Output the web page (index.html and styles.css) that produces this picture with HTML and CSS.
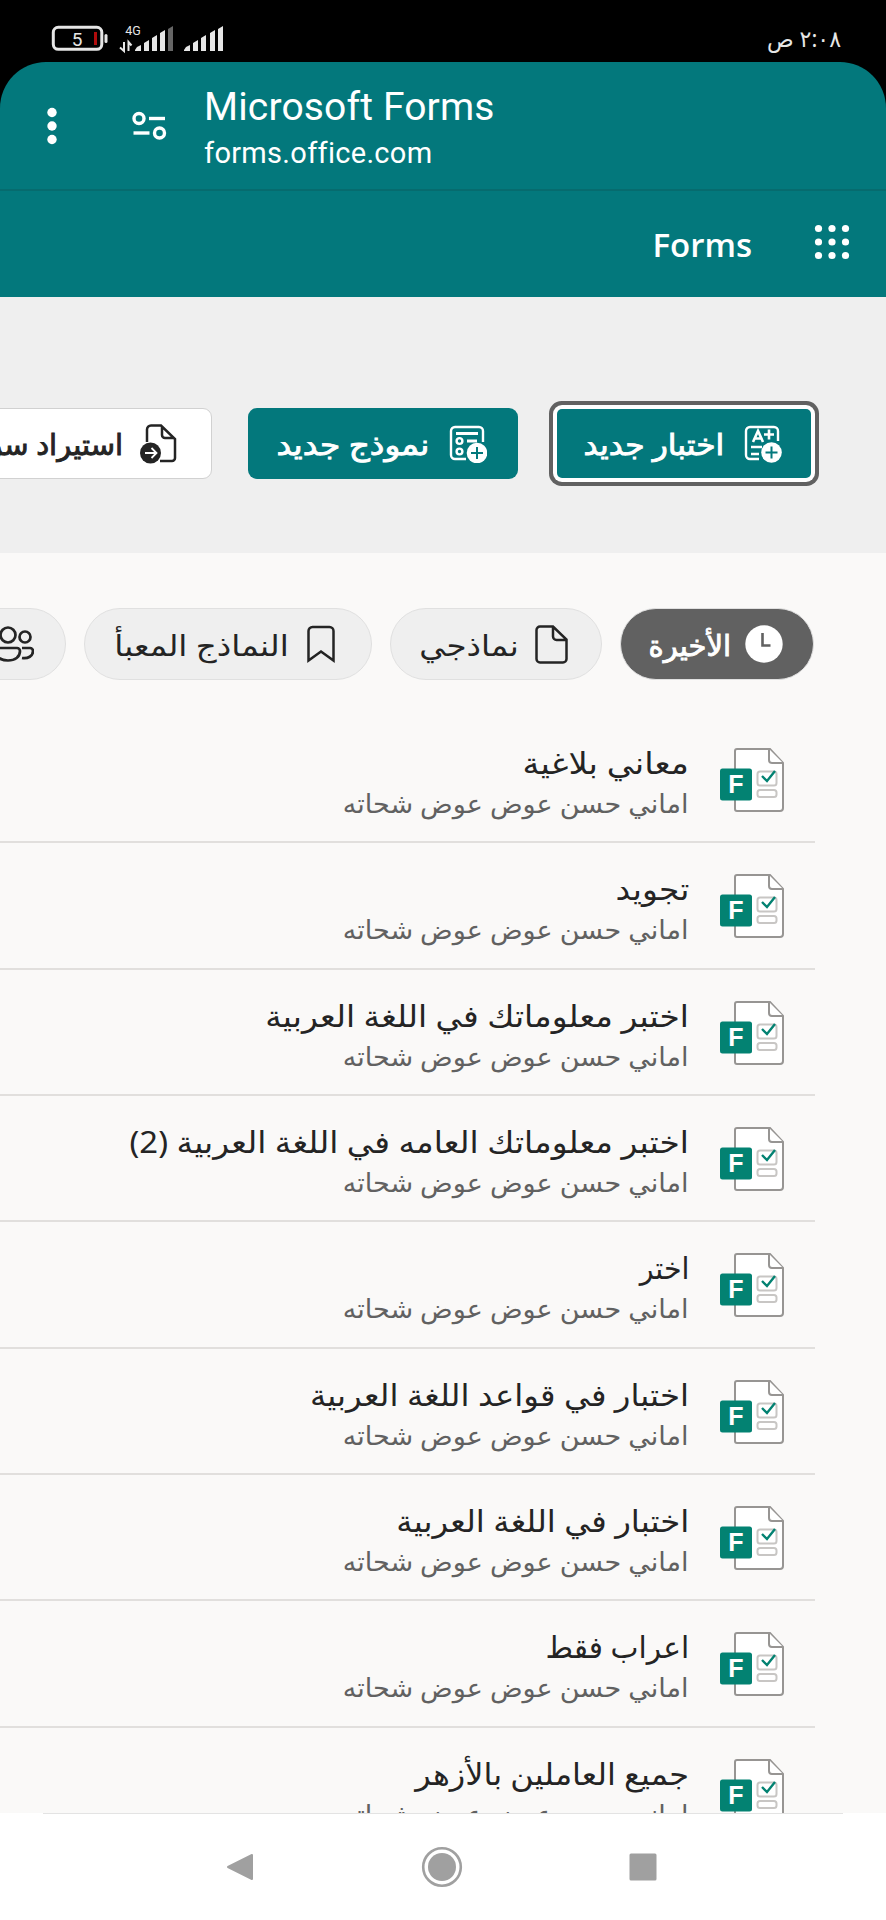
FILE: index.html
```html
<!DOCTYPE html>
<html lang="ar" dir="rtl">
<head>
    <meta charset="UTF-8">
    <meta name="viewport" content="width=device-width, initial-scale=1.0">
    <title>Microsoft Forms</title>
    <link rel="stylesheet" href="styles.css">
</head>
<body>
    <svg class="defs" width="0" height="0">
        <symbol id="form_icon" viewBox="0 0 64 64">
            <path d="M17 1h33l13 14v45a3 3 0 0 1-3 3H17a2 2 0 0 1-2-2V3a2 2 0 0 1 2-2z" fill="#fff" stroke="#979593" stroke-width="2"/>
            <path d="M49 1v11a3 3 0 0 0 3 3h11" fill="#fff" stroke="#979593" stroke-width="2"/>
            <rect x="37.500" y="23.500" width="19" height="14" rx="2.500" fill="none" stroke="#c8c6c4" stroke-width="2"/>
            <rect x="37.500" y="42" width="19" height="7" rx="2.500" fill="none" stroke="#c8c6c4" stroke-width="2"/>
            <path d="M42 28l5 5 8-10" fill="none" stroke="#038272" stroke-width="2.400"/>
            <rect x="0" y="20.500" width="32" height="32" rx="2.500" fill="#038272"/>
        </symbol>
    </svg>

    <div class="status">
        <span class="time">٢:٠٨ ص</span>
        <svg class="signals" width="180" height="34" viewBox="50 21 180 34">
            <rect x="53.300" y="27.300" width="48.500" height="22" rx="5" fill="none" stroke="#e6e6e6" stroke-width="3"/>
            <rect x="104.500" y="34" width="3" height="9" rx="1.500" fill="#e6e6e6"/>
            <rect x="94" y="32" width="3" height="13" fill="#b00c0c"/>
            <text x="77" y="45.500" font-size="19" text-anchor="middle">5</text>
            <text x="133" y="34.500" font-size="12.500" text-anchor="middle">4G</text>
            <path d="M124 42v9l-4-3.500M128.500 51v-9l3 3.500" fill="none" stroke="#e6e6e6" stroke-width="2"/>
            <g fill="#e6e6e6">
                <path d="M135 50l2-3 4-2v6h-6zM144 43l5-3v11h-5zM152 38l5-3v16h-5zM160 33l5-3v21h-5z"/>
                <path fill="#666" d="M168 29l5-3v25h-5z"/>
                <path d="M184 50l2-3 4-2v6h-6zM193 43l5-3v11h-5zM201 38l5-3v16h-5zM210 33l5-3v21h-5zM218 29l5-3v25h-5z"/>
            </g>
        </svg>
    </div>

    <div class="browser_bar">
        <div class="site">
            <div class="site_title">Microsoft Forms</div>
            <div class="site_url">forms.office.com</div>
        </div>
        <svg class="tune" width="36" height="30" viewBox="0 0 36 30" fill="none" stroke="#fff" stroke-width="3.400">
            <circle cx="7" cy="7.500" r="5"/><path d="M17 7.500h16"/>
            <circle cx="27.500" cy="22" r="5"/><path d="M1.500 22h16"/>
        </svg>
        <svg class="dots" width="10" height="38" viewBox="0 0 10 38" fill="#fff">
            <circle cx="5" cy="5.500" r="4.700"/><circle cx="5" cy="19" r="4.700"/><circle cx="5" cy="32.500" r="4.700"/>
        </svg>
    </div>

    <div class="app_bar">
        <svg class="waffle" width="36" height="36" viewBox="0 0 36 36" fill="#fff">
            <circle cx="4.500" cy="4.500" r="3.600"/><circle cx="18" cy="4.500" r="3.600"/><circle cx="31.500" cy="4.500" r="3.600"/>
            <circle cx="4.500" cy="18" r="3.600"/><circle cx="18" cy="18" r="3.600"/><circle cx="31.500" cy="18" r="3.600"/>
            <circle cx="4.500" cy="31.500" r="3.600"/><circle cx="18" cy="31.500" r="3.600"/><circle cx="31.500" cy="31.500" r="3.600"/>
        </svg>
        <span class="app_name">Forms</span>
    </div>

    <div class="hero">
        <button class="btn btn_quiz">
            <svg width="38" height="38" viewBox="0 0 38 38" fill="none" stroke="#fff" stroke-width="2.400">
                <path d="M15 34H6a4 4 0 0 1-4-4V6a4 4 0 0 1 4-4h24a4 4 0 0 1 4 4v10"/>
                <path d="M9 17l5-11 5 11M11 13.500h6M20 9.500h10M25 4.500v10" stroke-width="2.600"/>
                <path d="M7 22h11M7 29h8"/>
                <circle cx="27.500" cy="27.500" r="10.300" fill="#fff" stroke="none"/>
                <path d="M27.500 21.500v12M21.500 27.500h12" stroke="#03787c" stroke-width="2"/>
            </svg>
            <span>اختبار جديد</span>
        </button>
        <button class="btn btn_form">
            <svg width="38" height="38" viewBox="0 0 38 38" fill="none" stroke="#fff" stroke-width="2.400">
                <path d="M17 34H6a4 4 0 0 1-4-4V6a4 4 0 0 1 4-4h24a4 4 0 0 1 4 4v11"/>
                <path d="M7 8.500h22M18 16h10" stroke-width="2.800"/>
                <circle cx="10.500" cy="16" r="2.900"/><circle cx="10.500" cy="26.500" r="2.900"/>
                <circle cx="28" cy="28" r="10.300" fill="#fff" stroke="none"/>
                <path d="M28 22v12M22 28h12" stroke="#03787c" stroke-width="2"/>
            </svg>
            <span>نموذج جديد</span>
        </button>
        <button class="btn btn_import">
            <svg width="37" height="40" viewBox="0 0 37 40" fill="none" stroke="#242424" stroke-width="2.500">
                <path d="M7 18V5.500a4 4 0 0 1 4-4h10l14 13.500v19a3 3 0 0 1-3 3H20M22 2v9a3 3 0 0 0 3 3h9"/>
                <circle cx="10.500" cy="29" r="10.500" fill="#242424" stroke="none"/>
                <path d="M5 29h11M11.500 24l5 5-5 5" stroke="#fff" stroke-width="1.800"/>
            </svg>
            <span>استيراد سريع</span>
        </button>
    </div>

    <div class="content">
        <div class="tabs">
            <div class="tab tab_recent">
                <svg width="38" height="38" viewBox="0 0 38 38"><circle cx="19" cy="19" r="18.700" fill="#fff"/><path d="M17.500 8v12.500h8" fill="none" stroke="#616161" stroke-width="2.600"/></svg>
                <span>الأخيرة</span>
            </div>
            <div class="tab tab_mine">
                <svg width="33" height="39" viewBox="0 0 33 39" fill="none" stroke="#242424" stroke-width="2.500"><path d="M5 1.500h13l13.500 13V34a3.500 3.500 0 0 1-3.500 3.500H5A3.500 3.500 0 0 1 1.500 34V5A3.500 3.500 0 0 1 5 1.500zM18 2v9.500a3.500 3.500 0 0 0 3.500 3.500H31"/></svg>
                <span>نماذجي</span>
            </div>
            <div class="tab tab_filled">
                <svg width="28" height="38" viewBox="0 0 28 38" fill="none" stroke="#242424" stroke-width="2.500"><path d="M1.500 35.500V6A4 4 0 0 1 5.500 2h17a4 4 0 0 1 4 4v29.500L14 26.500z"/></svg>
                <span>النماذج المعبأ</span>
            </div>
            <div class="tab tab_group">
                <svg width="42" height="38" viewBox="0 0 42 38" fill="none" stroke="#242424" stroke-width="2.700"><circle cx="16" cy="10" r="7.500"/><circle cx="33" cy="12" r="5.500"/><path d="M3 23h22a3 3 0 0 1 3 3c0 6-5 9.500-12 9.500S3 32 3 26zM30 23h8a3 3 0 0 1 3 3c0 5-5 8-11 7"/></svg>
            </div>
        </div>

        <div class="list">
            <div class="row">
                <div class="file"><svg width="64" height="64"><use href="#form_icon"/></svg><b>F</b></div>
                <div class="info"><p class="name">معاني بلاغية</p><p class="owner">اماني حسن عوض عوض شحاته</p></div>
            </div>
            <div class="row">
                <div class="file"><svg width="64" height="64"><use href="#form_icon"/></svg><b>F</b></div>
                <div class="info"><p class="name">تجويد</p><p class="owner">اماني حسن عوض عوض شحاته</p></div>
            </div>
            <div class="row">
                <div class="file"><svg width="64" height="64"><use href="#form_icon"/></svg><b>F</b></div>
                <div class="info"><p class="name">اختبر معلوماتك في اللغة العربية</p><p class="owner">اماني حسن عوض عوض شحاته</p></div>
            </div>
            <div class="row">
                <div class="file"><svg width="64" height="64"><use href="#form_icon"/></svg><b>F</b></div>
                <div class="info"><p class="name">اختبر معلوماتك العامه في اللغة العربية (2)</p><p class="owner">اماني حسن عوض عوض شحاته</p></div>
            </div>
            <div class="row">
                <div class="file"><svg width="64" height="64"><use href="#form_icon"/></svg><b>F</b></div>
                <div class="info"><p class="name">اختر</p><p class="owner">اماني حسن عوض عوض شحاته</p></div>
            </div>
            <div class="row">
                <div class="file"><svg width="64" height="64"><use href="#form_icon"/></svg><b>F</b></div>
                <div class="info"><p class="name">اختبار في قواعد اللغة العربية</p><p class="owner">اماني حسن عوض عوض شحاته</p></div>
            </div>
            <div class="row">
                <div class="file"><svg width="64" height="64"><use href="#form_icon"/></svg><b>F</b></div>
                <div class="info"><p class="name">اختبار في اللغة العربية</p><p class="owner">اماني حسن عوض عوض شحاته</p></div>
            </div>
            <div class="row">
                <div class="file"><svg width="64" height="64"><use href="#form_icon"/></svg><b>F</b></div>
                <div class="info"><p class="name">اعراب فقط</p><p class="owner">اماني حسن عوض عوض شحاته</p></div>
            </div>
            <div class="row">
                <div class="file"><svg width="64" height="64"><use href="#form_icon"/></svg><b>F</b></div>
                <div class="info"><p class="name">جميع العاملين بالأزهر</p><p class="owner">اماني حسن عوض عوض شحاته</p></div>
            </div>
        </div>
    </div>

    <div class="nav">
        <svg width="28" height="28" viewBox="0 0 28 28"><rect x=".5" y=".5" width="27" height="27" rx="1.500" fill="#a0a0a0"/></svg>
        <svg width="42" height="42" viewBox="0 0 42 42"><circle cx="21" cy="21" r="18.800" fill="none" stroke="#a0a0a0" stroke-width="2.600"/><circle cx="21" cy="21" r="14" fill="#a0a0a0"/></svg>
        <svg width="28" height="32" viewBox="0 0 28 32"><path d="M26 4v24L2 16z" fill="#a0a0a0" stroke="#a0a0a0" stroke-width="2" stroke-linejoin="round"/></svg>
    </div>
</body>
</html>
```

FILE: styles.css
```css
*{
    box-sizing: border-box;
}
body{
    margin: 0;
    width: 886px;
    height: 1920px;
    overflow: hidden;
    background: #000;
    font-family: "Noto Sans", "DejaVu Sans", sans-serif;
    color: #242424;
}
svg{
    display: block;
    flex-shrink: 0;
}
p{
    margin: 0;
}
.defs{
    display: none;
}

/* phone status bar */
.status{
    height: 62px;
    padding: 14px 45px 0 50px;
    display: flex;
    justify-content: space-between;
    align-items: center;
    color: #e6e6e6;
}
.time{
    font-size: 23px;
    line-height: 34px;
    transform: scaleX(.96);
    transform-origin: right;
}
.signals text{
    fill: #e6e6e6;
    font-family: Roboto, sans-serif;
}

/* browser */
.browser_bar{
    height: 129px;
    padding: 0 0 0 47px;
    direction: ltr;
    display: flex;
    flex-direction: row-reverse;
    justify-content: flex-end;
    align-items: center;
    background: #03787c;
    border-radius: 46px 46px 0 0;
    border-bottom: 2px solid #066b6e;
    color: #fff;
    font-family: Roboto, sans-serif;
}
.tune{
    margin: 0 36px 0 75px;
}
.site{
    padding-top: 7px;
}
.site_title{
    font-size: 39px;
    line-height: 46px;
    letter-spacing: .15px;
}
.site_url{
    margin-top: 2px;
    font-size: 29px;
    line-height: 42px;
    letter-spacing: .3px;
}
.app_bar{
    height: 106px;
    padding: 0 36px 5px 0;
    display: flex;
    align-items: center;
    gap: 62px;
    background: #03787c;
    color: #fff;
}
.app_name{
    margin-top: 6px;
    font: 600 33px "Open Sans", sans-serif;
}

/* new form buttons */
.hero{
    height: 256px;
    padding: 111px 75px 0 0;
    display: flex;
    gap: 39px;
    background: #efefef;
    overflow: hidden;
}
.btn{
    height: 71px;
    flex-shrink: 0;
    display: flex;
    align-items: center;
    gap: 20px;
    padding: 0 29px 0 0;
    border: none;
    border-radius: 9px;
    background: #03787c;
    color: #fff;
    font: 29px "Noto Sans", "DejaVu Sans", sans-serif;
    -webkit-text-stroke: .9px;
    white-space: nowrap;
}
.btn span, .tab span{
    transform-origin: right;
}
.btn_quiz{
    width: 254px;
    height: 69px;
    margin-top: 1px;
    border-radius: 5px;
    box-shadow: 0 0 0 4px #fff, 0 0 0 8px #616161;
}
.btn_quiz span{
    transform: scaleX(1.08);
}
.btn_form{
    width: 270px;
    padding-right: 31px;
}
.btn_form span{
    transform: scaleX(1.13);
}
.btn_import{
    width: 330px;
    margin-right: -3px;
    padding-right: 34px;
    gap: 17px;
    border: 1px solid #d1d1d1;
    background: #fff;
    color: #242424;
}

/* tabs */
.content{
    height: 1260px;
    padding: 55px 72px 0 0;
    overflow: hidden;
    background: #faf9f8;
}
.tabs{
    display: flex;
    gap: 18px;
}
.tab{
    height: 72px;
    flex-shrink: 0;
    display: flex;
    align-items: center;
    gap: 16px;
    padding-right: 33px;
    border: 1px solid #e0e0e0;
    border-radius: 36px;
    background: #efefef;
    font-size: 29px;
    white-space: nowrap;
}
.tab_recent{
    width: 194px;
    padding-right: 30px;
    gap: 14px;
    background: #616161;
    color: #fff;
    -webkit-text-stroke: .9px;
}
.tab_mine{
    width: 212px;
}
.tab_mine span, .tab_filled span{
    transform: scaleX(1.12);
}
.tab_filled{
    width: 288px;
    padding-right: 36px;
    gap: 18px;
}
.tab_group{
    width: 250px;
    padding-right: 31px;
}

/* recent list */
.list{
    margin-right: -1px;
    padding-top: 37px;
}
.row{
    height: 126.350px;
    padding: 31px 31px 0 0;
    display: flex;
    gap: 31px;
    border-bottom: 2px solid #e1dfdd;
}
.file{
    position: relative;
    width: 64px;
    height: 64px;
}
.file b{
    position: absolute;
    left: 0;
    top: 20px;
    width: 32px;
    text-align: center;
    color: #fff;
    font: bold 25px/33px "Liberation Sans", sans-serif;
}
.info{
    margin-top: -8px;
    white-space: nowrap;
}
.name, .owner{
    width: max-content;
    transform-origin: right;
}
.name{
    font-size: 30px;
    line-height: 45px;
    transform: scaleX(1.095);
}
/* short names run narrower */
.row:nth-child(1) .name{
    transform: scaleX(1.125);
}
.row:nth-child(5) .name{
    transform: scaleX(.95);
}
.row:nth-child(6) .name, .row:nth-child(7) .name{
    transform: scaleX(1.08);
}
.row:nth-child(8) .name{
    transform: scaleX(.99);
}
.row:nth-child(9) .name{
    transform: scaleX(1.065);
}
.owner{
    font-size: 26px;
    line-height: 37px;
    color: #616161;
    transform: scaleX(1.04);
}

/* system buttons */
.nav{
    position: relative;
    height: 107px;
    padding: 0 229px 0 226px;
    display: flex;
    align-items: center;
    justify-content: space-between;
    background: #fff;
}
.nav::before{
    content: "";
    position: absolute;
    top: 0;
    left: 43px;
    right: 43px;
    height: 1px;
    background: #e3e3e3;
}
```
